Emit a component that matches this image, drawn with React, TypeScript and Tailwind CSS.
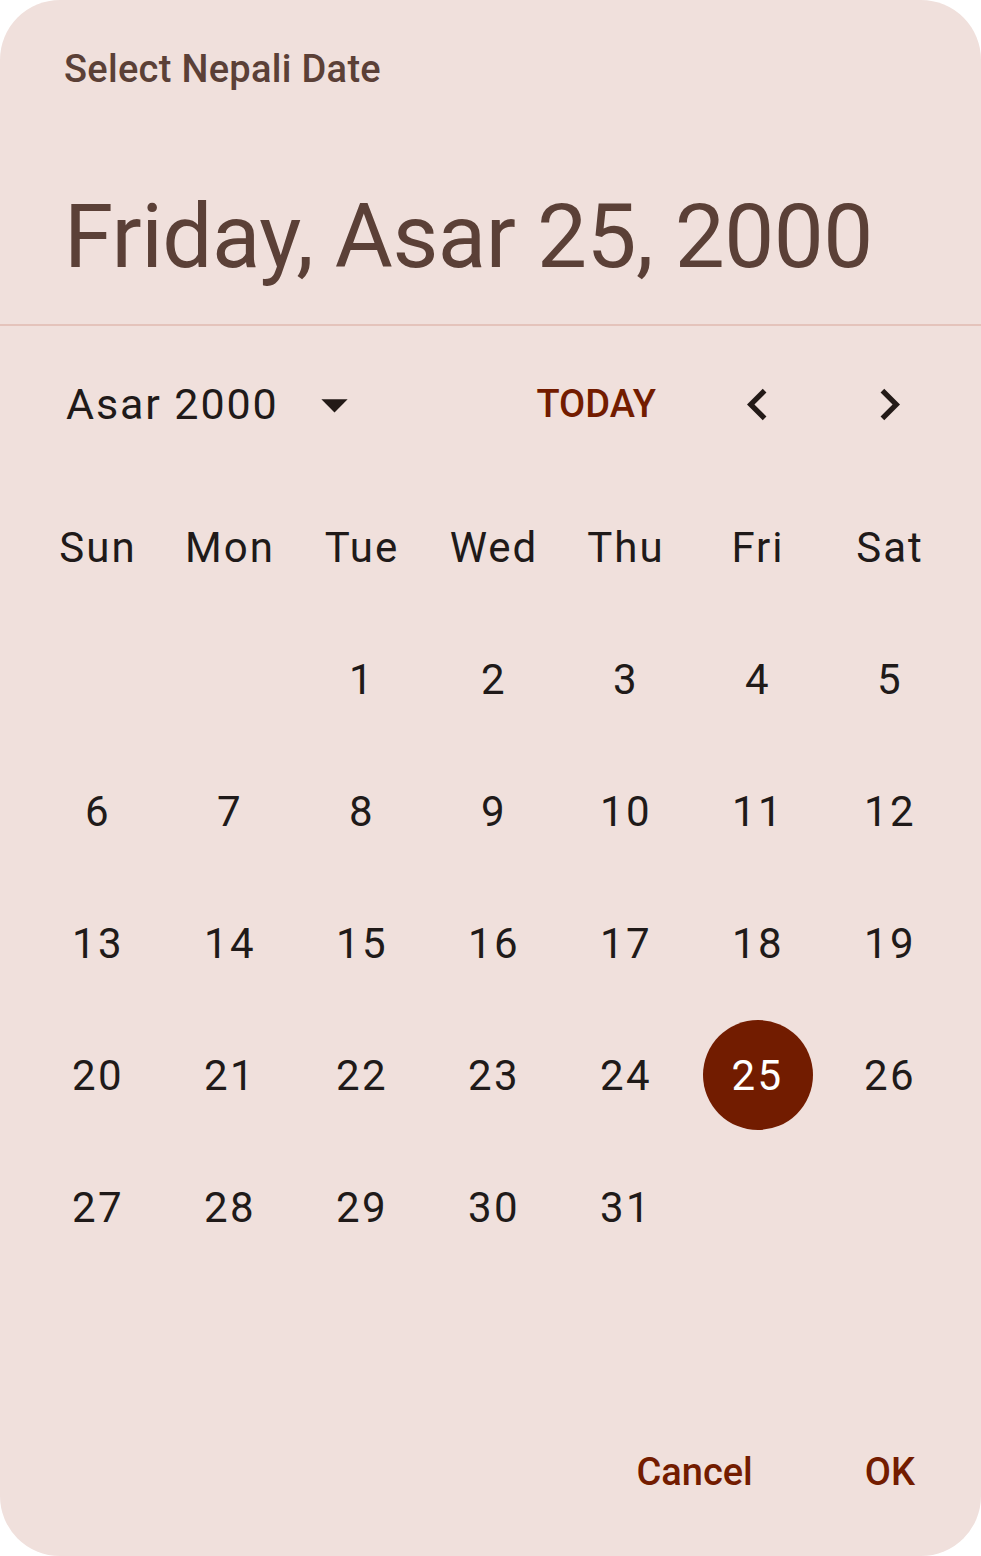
import { } from 'react';

const weekDays = ["Sun", "Mon", "Tue", "Wed", "Thu", "Fri", "Sat"];

// Asar 2000 starts on a Tuesday, 31 days
const cells: (number | null)[] = [null, null, ...Array.from({ length: 31 }, (_, i) => i + 1)];

const SELECTED = 25;

const MdChevron = ({ dir }: { dir: 'left' | 'right' }) => (
    <svg width="63" height="63" viewBox="0 0 24 24" fill="#231a17">
        {dir === 'left'
            ? <path d="M15.41 7.41L14 6l-6 6 6 6 1.41-1.41L10.83 12z" />
            : <path d="M10 6L8.59 7.41 13.17 12l-4.58 4.59L10 18l6-6z" />}
    </svg>
);

const App = () => {
    return (
        <div className="w-[981px] h-[1556px] bg-white font-['Roboto',sans-serif]">
            <div className="h-full rounded-[60px] bg-[#f0e0dc] flex flex-col">
                {/* Header */}
                <div className="px-[64px] pt-[47px]">
                    <h3 className="text-[38px] leading-[44px] tracking-[0.3px] font-medium text-[#5b4037]">Select Nepali Date</h3>
                    <h1 className="mt-[96px] text-[89px] leading-[100px] tracking-[-0.5px] text-[#5b4037]">Friday, Asar 25, 2000</h1>
                </div>
                <div className="mt-[37px] h-[2px] bg-[#e4c3bb]"></div>

                {/* Month navigation */}
                <div className="mt-[34px] h-[88px] flex items-center pl-[66px] pr-[26px]">
                    <span className="text-[43px] tracking-[1.9px] text-[#201a19]">Asar 2000</span>
                    <svg className="ml-[24px]" width="63" height="63" viewBox="0 0 24 24" fill="#231a17">
                        <path d="M7 10l5 5 5-5z" />
                    </svg>
                    <button className="ml-auto mr-[35px] text-[38px] font-medium text-[#731c00]">TODAY</button>
                    <div className="w-[132px] flex justify-center"><MdChevron dir="left" /></div>
                    <div className="w-[132px] flex justify-center"><MdChevron dir="right" /></div>
                </div>

                {/* Calendar grid */}
                <div className="mt-[33px] pl-[32px] grid grid-cols-[repeat(7,132px)] text-[#201a19]">
                    {weekDays.map((d) => (
                        <div key={d} className="h-[132px] flex items-center justify-center text-[42px] tracking-[2px]">{d}</div>
                    ))}
                    {cells.map((n, i) => (
                        <div key={i} className="h-[132px] flex items-center justify-center">
                            {n !== null && (
                                n === SELECTED
                                    ? <div className="w-[110px] h-[110px] -ml-[1px] rounded-full bg-[#721c00] text-white flex items-center justify-center text-[42px] tracking-[2.5px]">{n}</div>
                                    : <span className="text-[42px] tracking-[2.5px]">{n}</span>
                            )}
                        </div>
                    ))}
                </div>

                {/* Actions */}
                <div className="mt-auto mb-[62px] flex justify-end gap-[112px] pr-[66px]">
                    <button className="text-[38px] leading-[44px] font-medium text-[#731c00]">Cancel</button>
                    <button className="text-[38px] leading-[44px] font-medium text-[#731c00]">OK</button>
                </div>
            </div>
        </div>
    );
};

export default App;
